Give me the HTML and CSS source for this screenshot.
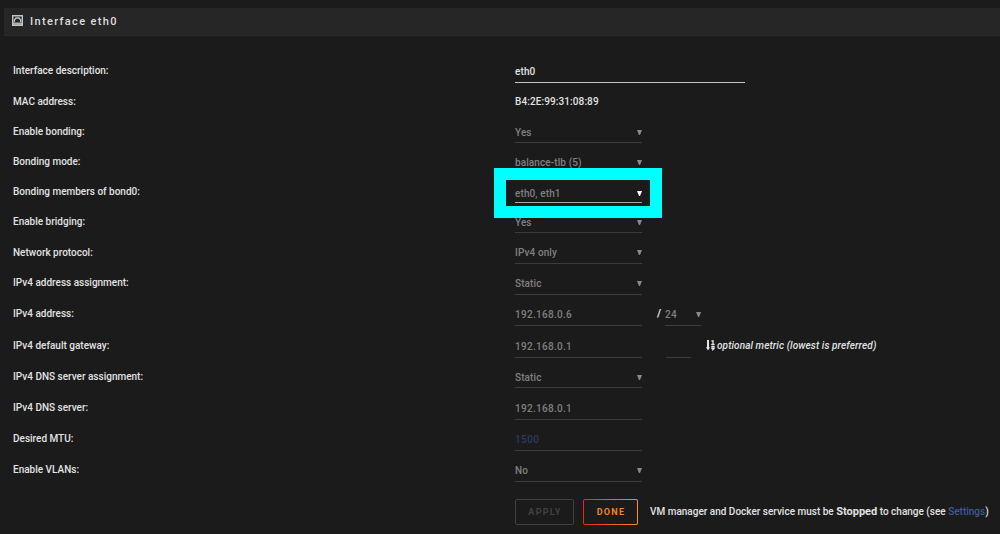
FILE: index.html
```html
<!DOCTYPE html>
<html lang="en">
<head>
<meta charset="utf-8">
<title>Interface eth0</title>
<link rel="stylesheet" href="styles.css">
</head>
<body>
<div class="title">
    <svg class="title-icon" viewBox="0 0 11 11">
        <path d="M.7 .7h9.6v9.6H.7z" fill="none" stroke="#c4c4c4" stroke-width="1.4"/>
        <path d="M2.3 7V5l1.7-2h3l1.7 2v2" fill="none" stroke="#c4c4c4" stroke-width="1.3"/>
        <path d="M1 8.7h9" stroke="#b0b0b0" stroke-width="2.4"/>
    </svg>
    <span>Interface eth0</span>
</div>

<form class="settings" action="#">
    <div class="row first">
        <label>Interface description:</label>
        <div class="field wide active"><span>eth0</span></div>
    </div>
    <div class="row h30">
        <label>MAC address:</label>
        <div class="mac">B4:2E:99:31:08:89</div>
    </div>
    <div class="row h30">
        <label>Enable bonding:</label>
        <div class="field select"><span>Yes</span></div>
    </div>
    <div class="row h30">
        <label>Bonding mode:</label>
        <div class="field select"><span>balance-tlb (5)</span></div>
    </div>
    <div class="row h30 members">
        <label>Bonding members of bond0:</label>
        <div class="field select open"><span>eth0, eth1</span></div>
        <div class="highlight"></div>
    </div>
    <div class="row h30">
        <label>Enable bridging:</label>
        <div class="field select"><span>Yes</span></div>
    </div>
    <div class="row">
        <label class="low">Network protocol:</label>
        <div class="field select"><span>IPv4 only</span></div>
    </div>
    <div class="row">
        <label>IPv4 address assignment:</label>
        <div class="field select"><span>Static</span></div>
    </div>
    <div class="row">
        <label>IPv4 address:</label>
        <div class="field"><span class="ip">192.168.0.6</span></div>
        <b class="slash">/</b>
        <div class="field select mask"><span>24</span></div>
    </div>
    <div class="row h32">
        <label>IPv4 default gateway:</label>
        <div class="field"><span class="ip">192.168.0.1</span></div>
        <div class="field metric"></div>
        <svg class="sort-icon" viewBox="0 0 9 11">
            <path d="M2 0v8" fill="none" stroke="#e6e6e6" stroke-width="2"/>
            <path d="M0 7.2h4L2 10.6z" fill="#e6e6e6"/>
            <path d="M5.4 1.2L7 .8v3.4M5.2 4.4h3.4" fill="none" stroke="#e6e6e6" stroke-width="1.3"/>
            <path d="M8 8.3H6V6.4h2v2.3L6 10.2" fill="none" stroke="#e6e6e6" stroke-width="1.3"/>
        </svg>
        <i class="hint">optional metric (lowest is preferred)</i>
    </div>
    <div class="row h30">
        <label>IPv4 DNS server assignment:</label>
        <div class="field select"><span>Static</span></div>
    </div>
    <div class="row h32">
        <label>IPv4 DNS server:</label>
        <div class="field"><span class="ip">192.168.0.1</span></div>
    </div>
    <div class="row">
        <label>Desired MTU:</label>
        <div class="field"><span class="placeholder">1500</span></div>
    </div>
    <div class="row">
        <label>Enable VLANs:</label>
        <div class="field select"><span>No</span></div>
    </div>

    <div class="buttons">
        <button type="button" class="btn apply" disabled>APPLY</button>
        <button type="button" class="btn done">DONE</button>
        <p class="note">VM manager and Docker service must be <b>Stopped</b> to change (see <a>Settings</a>)</p>
    </div>
</form>
</body>
</html>
```
FILE: styles.css
```css
body {
    margin: 0;
    height: 534px;
    overflow: hidden;
    background: #1b1b1b;
    color: #e2e2e2;
    font-family: Roboto, "Noto Sans", sans-serif;
    font-size: 10px;
    font-weight: 500;
}
.title {
    display: flex;
    align-items: center;
    box-sizing: border-box;
    height: 28px;
    margin: 8px 0 0 4px;
    padding: 0 0 1px 8px;
    background: #262626;
    border-bottom: 1px solid #2b2b2b;
    color: #dedede;
    font-size: 11px;
    letter-spacing: 1.35px;
}
.title-icon {
    width: 11px;
    height: 11px;
    margin: 0 7px 1px 0;
}
.settings {
    padding: 25px 0 0 13px;
}
.row {
    display: flex;
    align-items: flex-end;
    height: 31px;
}
.row.first {
    height: 22px;
}
.h30 {
    height: 30px;
}
.h32 {
    height: 32px;
}
.row label {
    width: 502px;
    height: 20px;
    line-height: 16px;
    white-space: nowrap;
}
.row.h30 label,
.row .low {
    height: 19px;
}
.field {
    display: flex;
    justify-content: space-between;
    box-sizing: border-box;
    width: 127px;
    height: 20px;
    line-height: 17px;
    border-bottom: 1px solid #3c3c3c;
    color: #808080;
    letter-spacing: .1px;
    white-space: nowrap;
}
.h30 .field {
    height: 19px;
}
.wide {
    width: 230px;
}
.active {
    border-color: #c4c4c4;
    color: #e2e2e2;
}
.mac {
    height: 20px;
    line-height: 17px;
    color: #e2e2e2;
    letter-spacing: .1px;
}
.select::after {
    content: "";
    width: 5px;
    height: 5px;
    margin-top: 6px;
    background: #8a8a8a;
    clip-path: polygon(0 0, 100% 0, 60% 100%, 40% 100%);
}
.h30 .open {
    height: 18px;
    border-color: #a8a8a8;
}
.open::after {
    background: #fff;
}
.members {
    position: relative;
}
.highlight {
    position: absolute;
    left: 481px;
    top: -5px;
    width: 144px;
    height: 26px;
    border: 12px solid #00ffff;
}
.ip {
    letter-spacing: .3px;
}
.placeholder {
    color: #2b3a63;
    letter-spacing: .4px;
}
.slash {
    height: 20px;
    margin: 0 4px 0 15px;
    line-height: 16px;
    font-size: 11px;
}
.mask {
    width: 36px;
    height: 20px;
}
.metric {
    width: 25px;
    margin-left: 24px;
}
.sort-icon {
    width: 9px;
    height: 11px;
    margin: 0 2px 7px 15px;
}
.hint {
    height: 20px;
    line-height: 16px;
    letter-spacing: .1px;
}
.buttons {
    display: flex;
    align-items: center;
    margin: 17px 0 0 502px;
}
.btn {
    flex: none;
    box-sizing: border-box;
    height: 26px;
    padding: 0 0 0 1px;
    border: 1px solid #3f3f3f;
    border-radius: 2px;
    background: none;
    color: #424242;
    font: bold 9px Roboto, sans-serif;
    letter-spacing: 1.3px;
}
.apply {
    width: 59px;
    margin-right: 9px;
}
.done {
    width: 55px;
    border-color: transparent;
    background: linear-gradient(#1b1b1b, #1b1b1b) padding-box, linear-gradient(90deg, #e22828, #ff8c2f) border-box;
    color: #f08429;
}
.note {
    margin: -2px 0 0 12px;
    white-space: nowrap;
}
.note b {
    font-size: 11px;
}
.note a {
    color: #40599b;
}
```
